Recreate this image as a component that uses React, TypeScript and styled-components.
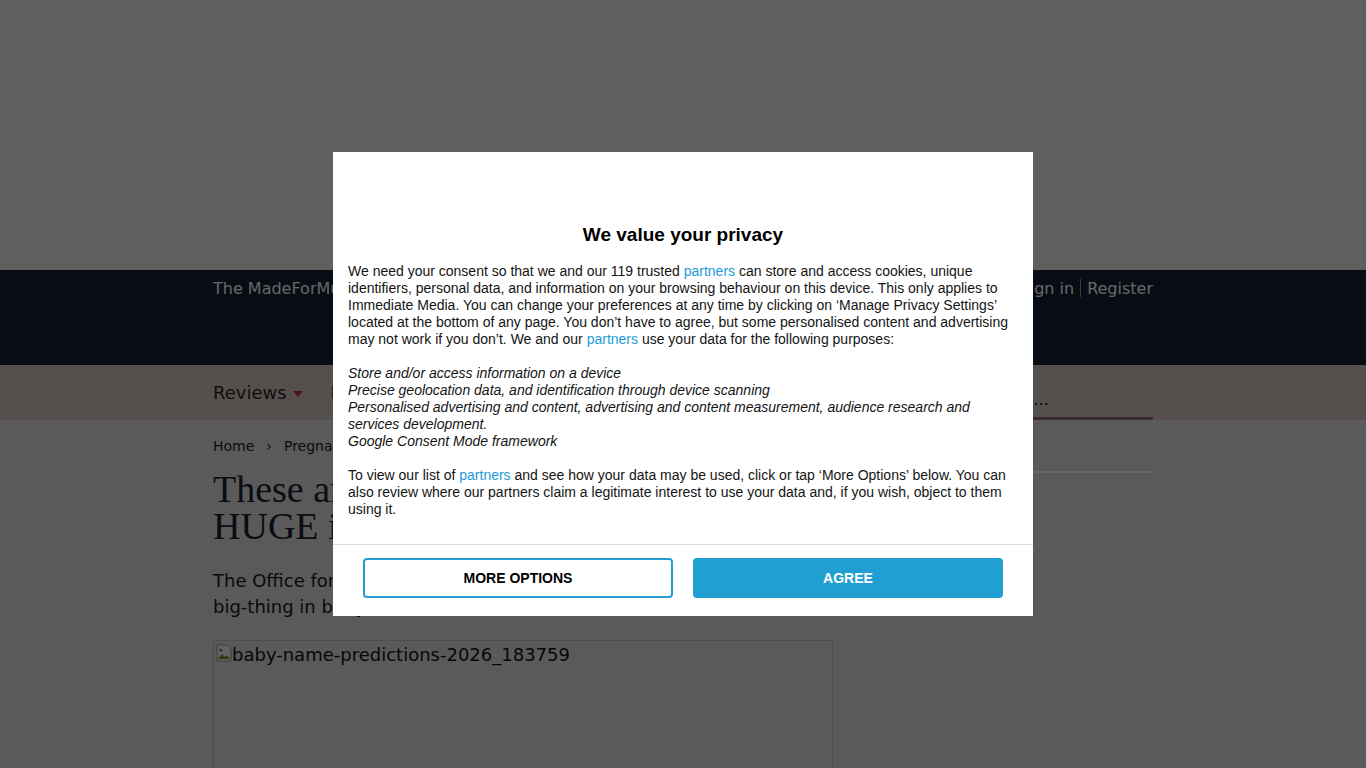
import React from "react";
import styled, { createGlobalStyle } from "styled-components";

const GlobalStyle = createGlobalStyle`
  html, body {
    margin: 0;
    padding: 0;
    background: #e1e1e1;
  }
  body {
    font-family: "DejaVu Sans", Verdana, sans-serif;
    overflow: hidden;
  }
`;

const Page = styled.div`
  width: 100%;
  height: 768px;
  overflow: hidden;
  background: #e1e1e1;
`;

const AdSlot = styled.div`
  height: 270px;
  background: #ededed;
`;

const Header = styled.header`
  height: 95px;
  background: #141e32;
`;

const Container = styled.div`
  width: 940px;
  margin: 0 auto;
`;

const HeaderRow = styled(Container)`
  display: flex;
  justify-content: space-between;
  align-items: center;
  padding-top: 8px;
  height: 20px;
  font-size: 16px;
  color: #ffffff;
`;

const AccountLinks = styled.div`
  display: flex;
  align-items: center;
`;

const Divider = styled.span`
  display: inline-block;
  width: 1px;
  height: 18px;
  margin: 0 6px;
  background: #ffffff;
  opacity: 0.5;
`;

const Nav = styled.nav`
  height: 55px;
  background: #d4c8c0;
  border-bottom: 1px solid #ececec;
`;

const NavRow = styled(Container)`
  height: 100%;
  display: flex;
  align-items: center;
  justify-content: space-between;
`;

const NavItems = styled.div`
  display: flex;
  align-items: center;
  gap: 28px;
  font-size: 18px;
  color: #262626;
`;

const NavItem = styled.span`
  display: flex;
  align-items: center;
  gap: 6px;
`;

const Caret = styled.span`
  width: 0;
  height: 0;
  border-left: 5px solid transparent;
  border-right: 5px solid transparent;
  border-top: 6px solid #b8324a;
  margin-top: 3px;
`;

const SearchBox = styled.div`
  align-self: flex-end;
  width: 296px;
  height: 36px;
  padding-left: 4px;
  display: flex;
  align-items: center;
  border-bottom: 3px solid #9a6b7c;
  font-size: 16px;
  color: #111;
  white-space: nowrap;
  overflow: hidden;
`;

const Main = styled(Container)`
  display: flex;
  gap: 20px;
  padding-top: 14px;
`;

const Article = styled.article`
  width: 620px;
`;

const Breadcrumb = styled.div`
  display: flex;
  align-items: center;
  gap: 12px;
  font-size: 14px;
  color: #222;
  height: 22px;
`;

const Headline = styled.h1`
  margin: 14px 0 0;
  font-family: "Liberation Serif", "Times New Roman", serif;
  font-weight: 400;
  font-size: 38px;
  line-height: 37px;
  color: #1c2130;
`;

const Intro = styled.p`
  margin: 23px 0 0;
  font-size: 18px;
  line-height: 26px;
  color: #1a1a1a;
`;

const ImageFrame = styled.div`
  margin-top: 20px;
  height: 300px;
  border: 1px solid #c4c4c4;
  padding: 3px 2px;
  display: flex;
  align-items: flex-start;
  font-size: 18px;
  color: #111;
`;

const Sidebar = styled.aside`
  width: 300px;
`;

const SideBlock = styled.div`
  height: 36px;
  border-bottom: 2px solid #ffffff;
`;

const Overlay = styled.div`
  position: fixed;
  inset: 0;
  background: rgba(0, 0, 0, 0.6);
  display: flex;
  align-items: center;
  justify-content: center;
  z-index: 10;
`;

const Modal = styled.div`
  width: 700px;
  background: #ffffff;
  font-family: "Liberation Sans", Arial, sans-serif;
  color: #141414;
`;

const ModalBody = styled.div`
  padding: 0 15px;
`;

const LogoSpace = styled.div`
  height: 71px;
`;

const Title = styled.h2`
  margin: 0 0 16px;
  text-align: center;
  font-size: 19px;
  line-height: 24px;
  font-weight: 700;
  color: #000;
`;

const Para = styled.p`
  margin: 0 0 17px;
  font-size: 14px;
  line-height: 17px;
`;

const Purposes = styled(Para)`
  font-style: italic;
`;

const Link = styled.a`
  color: #1e9bd7;
  text-decoration: none;
`;

const ModalFooter = styled.div`
  margin-top: 26px;
  border-top: 1px solid #dcdcdc;
  padding: 13px 30px 18px;
  display: flex;
  gap: 20px;
`;

const Button = styled.button<{ $primary?: boolean }>`
  flex: 1;
  height: 40px;
  border-radius: 4px;
  border: 2px solid #219fd3;
  background: ${(p) => (p.$primary ? "#219fd3" : "#ffffff")};
  color: ${(p) => (p.$primary ? "#ffffff" : "#000000")};
  font-family: "Liberation Sans", Arial, sans-serif;
  font-weight: 700;
  font-size: 14px;
  text-transform: uppercase;
  cursor: pointer;
`;

const BrokenImage = () => (
  <svg width="16" height="18" viewBox="0 0 16 18">
    <path d="M1 1h10l4 4v12H1z" fill="#f4f4f4" stroke="#9a9a9a" />
    <path d="M2 15l4-5 3 3 2-2 3 4z" fill="#5a9a3c" />
    <circle cx="5" cy="6" r="1.5" fill="#4a7ab8" />
  </svg>
);

export default function App() {
  return (
    <>
      <GlobalStyle />
      <Page>
        <AdSlot />
        <Header>
          <HeaderRow>
            <span>The MadeForMums Community</span>
            <AccountLinks>
              <span>Sign in</span>
              <Divider />
              <span>Register</span>
            </AccountLinks>
          </HeaderRow>
        </Header>
        <Nav>
          <NavRow>
            <NavItems>
              <NavItem>
                Reviews <Caret />
              </NavItem>
              <NavItem>
                Pregnancy <Caret />
              </NavItem>
              <NavItem>
                Baby <Caret />
              </NavItem>
            </NavItems>
            <SearchBox>Search MadeForMums...</SearchBox>
          </NavRow>
        </Nav>
        <Main>
          <Article>
            <Breadcrumb>
              <span>Home</span>
              <span>›</span>
              <span>Pregnancy</span>
            </Breadcrumb>
            <Headline>
              These are the baby names set to be
              <br />
              HUGE in 2026
            </Headline>
            <Intro>
              The Office for National Statistics has revealed what will be the
              next big-thing in baby names
            </Intro>
            <ImageFrame>
              <BrokenImage />
              <span>baby-name-predictions-2026_183759</span>
            </ImageFrame>
          </Article>
          <Sidebar>
            <SideBlock />
          </Sidebar>
        </Main>
      </Page>
      <Overlay>
        <Modal>
          <ModalBody>
            <LogoSpace />
            <Title>We value your privacy</Title>
            <Para>
              We need your consent so that we and our 119 trusted{" "}
              <Link href="#">partners</Link> can store and access cookies,
              unique identifiers, personal data, and information on your
              browsing behaviour on this device. This only applies to Immediate
              Media. You can change your preferences at any time by clicking on
              ‘Manage Privacy Settings’ located at the bottom of any page. You
              don’t have to agree, but some personalised content and advertising
              may not work if you don’t. We and our{" "}
              <Link href="#">partners</Link> use your data for the following
              purposes:
            </Para>
            <Purposes>
              Store and/or access information on a device
              <br />
              Precise geolocation data, and identification through device
              scanning
              <br />
              Personalised advertising and content, advertising and content
              measurement, audience research and services development.
              <br />
              Google Consent Mode framework
            </Purposes>
            <Para>
              To view our list of <Link href="#">partners</Link> and see how
              your data may be used, click or tap ‘More Options’ below. You can
              also review where our partners claim a legitimate interest to use
              your data and, if you wish, object to them using it.
            </Para>
          </ModalBody>
          <ModalFooter>
            <Button>More Options</Button>
            <Button $primary>Agree</Button>
          </ModalFooter>
        </Modal>
      </Overlay>
    </>
  );
}
